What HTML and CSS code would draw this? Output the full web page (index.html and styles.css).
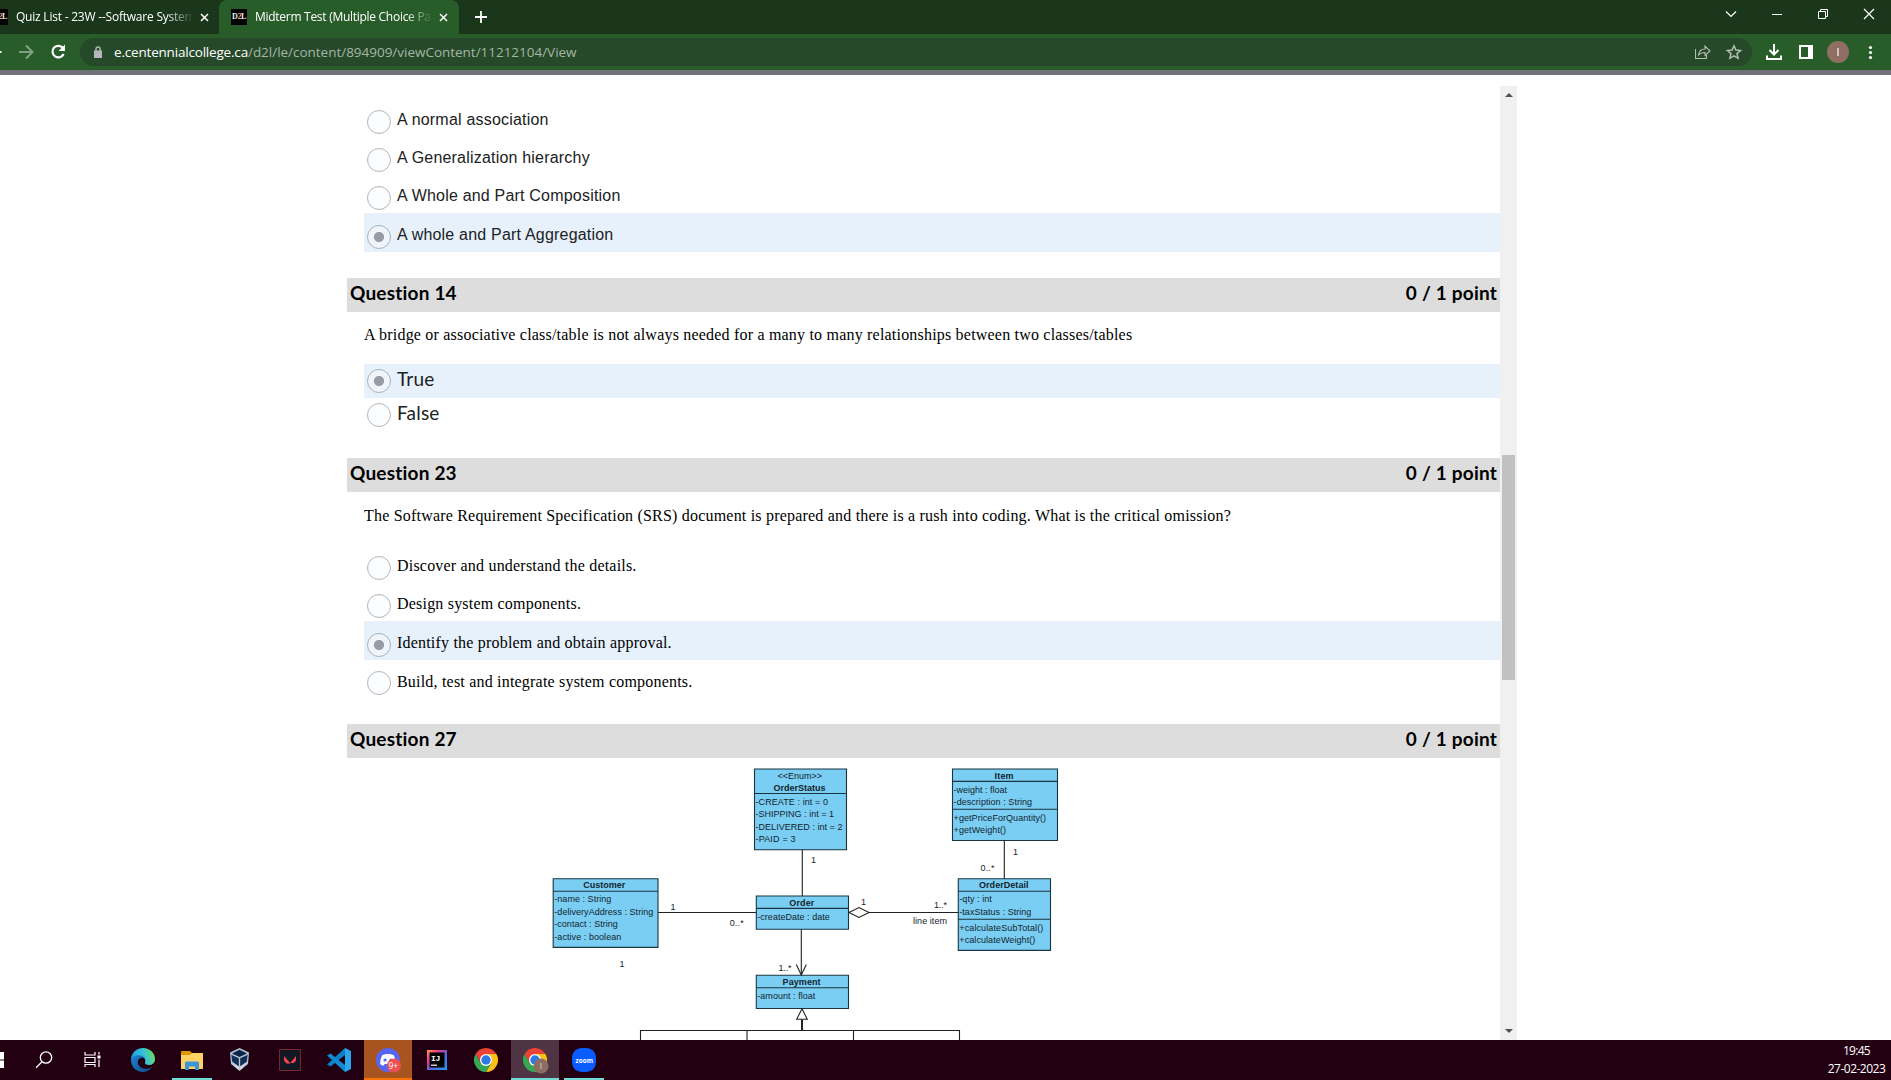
FILE: index.html
```
<!DOCTYPE html>
<html lang="en">
<head>
<meta charset="utf-8">
<title>Midterm Test (Multiple Choice Part)</title>
<link rel="stylesheet" href="styles.css">
</head>
<body>
<div class="screen">
  <header class="tabstrip">
    <div class="tab tab-first">
      <span class="favicon">D<i>2</i>L</span>
      <span class="tab-title title-quiz">Quiz List - 23W --Software Systems</span>
      <svg class="tab-close" viewBox="0 0 9 9"><path d="M1 1l7 7M8 1l-7 7"/></svg>
    </div>
    <div class="tab tab-active">
      <span class="favicon">D<i>2</i>L</span>
      <span class="tab-title title-test">Midterm Test (Multiple Choice Part)</span>
      <svg class="tab-close" viewBox="0 0 9 9"><path d="M1 1l7 7M8 1l-7 7"/></svg>
    </div>
    <svg class="new-tab" viewBox="0 0 12 12"><path d="M6 0v12M0 6h12"/></svg>
    <div class="window-buttons">
      <svg viewBox="0 0 46 28"><path d="M18 11.500l5 5 5-5" stroke-width="1.200"/></svg>
      <svg viewBox="0 0 46 28"><path d="M18 14.500h10"/></svg>
      <svg viewBox="0 0 46 28"><path d="M18.500 11.500h7v7h-7zM20.500 11.500v-2h7v7h-2"/></svg>
      <svg viewBox="0 0 46 28"><path d="M18 9l10 10M28 9l-10 10" stroke-width="1.200"/></svg>
    </div>
  </header>

  <nav class="toolbar">
    <svg class="nav-icons" viewBox="0 0 80 36">
      <path class="back" d="M0 18h1.500"/>
      <path class="forward" d="M19 18h13M26 11.500l6.500 6.500-6.500 6.500"/>
      <path class="reload" d="M63 14.200A5.800 5.800 0 1 0 63.600 20"/>
      <path class="reload-head" d="M65 10.500v6.500h-6.500z"/>
    </svg>
    <div class="omnibox">
      <svg class="lock" viewBox="0 0 8 12"><path d="M0 4.500h8v7.500H0z"/><path class="shackle" d="M2 5V3a2 2 0 0 1 4 0v2"/></svg>
      <span class="host">e.centennialcollege.ca</span><span class="path">/d2l/le/content/894909/viewContent/11212104/View</span>
      <svg class="omni-icons" viewBox="0 0 56 28">
        <path d="M.5 11v9.500h11v-3.500"/>
        <path d="M3.500 17c.5-4 3-6 6.500-6V8l5 5-5 4.500v-3c-3 0-5 .8-6.500 2.500z"/>
        <path d="M39 7.800l1.900 4.300 4.600.4-3.500 3.100 1.100 4.700-4.100-2.500-4.100 2.500 1.100-4.700-3.500-3.100 4.600-.4z" stroke-width="1.500"/>
      </svg>
    </div>
    <svg class="tool-icons" viewBox="0 0 139 36">
      <path class="line2" d="M22 10v10M17.500 16l4.500 4.500 4.500-4.500M15 21.500v3.500h14v-3.500"/>
      <path class="white" d="M47 11h14v14H47zM49 13v10h7V13z" fill-rule="evenodd"/>
      <circle cx="86" cy="18" r="11" fill="#8f6e64"/>
      <path d="M86 14v8" stroke="#e8deda" stroke-width="1.500"/>
      <g class="white"><circle cx="118.500" cy="13.500" r="1.600"/><circle cx="118.500" cy="18.500" r="1.600"/><circle cx="118.500" cy="23.500" r="1.600"/></g>
    </svg>
  </nav>

  <main class="page">
    <section class="quiz">
      <ul class="options sans">
        <li><span class="radio"></span>A normal association</li>
        <li><span class="radio"></span>A Generalization hierarchy</li>
        <li><span class="radio"></span>A Whole and Part Composition</li>
        <li class="selected"><span class="radio"></span>A whole and Part Aggregation</li>
      </ul>

      <h2 class="question"><span>Question 14</span><span>0 / 1 point</span></h2>
      <p class="prompt">A bridge or associative class/table is not always needed for a many to many relationships between two classes/tables</p>
      <ul class="options truefalse">
        <li class="selected"><span class="radio"></span>True</li>
        <li><span class="radio"></span>False</li>
      </ul>

      <h2 class="question q23"><span>Question 23</span><span>0 / 1 point</span></h2>
      <p class="prompt">The Software Requirement Specification (SRS) document is prepared and there is a rush into coding. What is the critical omission?</p>
      <ul class="options serif">
        <li><span class="radio"></span>Discover and understand the details.</li>
        <li><span class="radio"></span>Design system components.</li>
        <li class="selected"><span class="radio"></span>Identify the problem and obtain approval.</li>
        <li><span class="radio"></span>Build, test and integrate system components.</li>
      </ul>

      <h2 class="question"><span>Question 27</span><span>0 / 1 point</span></h2>
      <svg class="diagram" viewBox="540 758 560 282">
        <g class="box">
          <path d="M754.500 769h92v80.700h-92zM754.500 793.500h92"/>
          <path d="M952.500 769h105v71.500h-105zM952.500 781.400h105M952.500 809.300h105"/>
          <path d="M553.200 878.800h104.800v68.600H553.200zM553.200 891.300h104.800"/>
          <path d="M756.300 896h92.200v33.300h-92.200zM756.300 908.400h92.200"/>
          <path d="M958.300 878.800h92.200v71.600h-92.200zM958.300 891.300h92.200M958.300 919.300h92.200"/>
          <path d="M756.300 975.300h92.200v33.200h-92.200zM756.300 987.700h92.200"/>
        </g>
        <g class="link">
          <path d="M802.300 849.700V896M658 912.500h98.300M869 912.500h89.300M1004.300 840.500v38.300M801.300 929.300V975"/>
          <path d="M849 912.500l10-5 10 5-10 5z"/>
          <path d="M796.300 964.500l5 10.500 5-10.500"/>
          <path d="M802 1008.800l-5.300 10.500h10.600z"/>
          <path d="M802 1019.500v11" stroke-width="2"/>
          <path d="M640.500 1040v-9.500h319V1040M747 1030.500v9.500M853.500 1030.500v9.500"/>
        </g>
        <g class="name">
          <text x="777.500" y="778.600" class="plain" textLength="44.500">&lt;&lt;Enum&gt;&gt;</text>
          <text x="773.600" y="790.700" textLength="52">OrderStatus</text>
          <text x="994.600" y="778.600" textLength="19">Item</text>
          <text x="583.300" y="888.300" textLength="42">Customer</text>
          <text x="789.300" y="905.600" textLength="25">Order</text>
          <text x="979" y="888.300" textLength="49.500">OrderDetail</text>
          <text x="782.600" y="984.800" textLength="38">Payment</text>
        </g>
        <g class="member">
          <text x="755.500" y="804.700" textLength="72.500">-CREATE : int = 0</text>
          <text x="755.500" y="817.200" textLength="78.500">-SHIPPING : int = 1</text>
          <text x="755.500" y="829.700" textLength="87">-DELIVERED : int = 2</text>
          <text x="755.500" y="842" textLength="40">-PAID = 3</text>
          <text x="953.600" y="792.700" textLength="53.500">-weight : float</text>
          <text x="953.600" y="805.200" textLength="78.500">-description : String</text>
          <text x="953.600" y="820.900" textLength="92.500">+getPriceForQuantity()</text>
          <text x="953.600" y="833.300" textLength="52.500">+getWeight()</text>
          <text x="554.300" y="902.400" textLength="57">-name : String</text>
          <text x="554.300" y="914.800" textLength="99">-deliveryAddress : String</text>
          <text x="554.300" y="927.200" textLength="63.500">-contact : String</text>
          <text x="554.300" y="939.700" textLength="67">-active : boolean</text>
          <text x="757.300" y="919.700" textLength="72.500">-createDate : date</text>
          <text x="959.300" y="902.400" textLength="32.500">-qty : int</text>
          <text x="959.300" y="914.800" textLength="72">-taxStatus : String</text>
          <text x="959.300" y="930.500" textLength="84">+calculateSubTotal()</text>
          <text x="959.300" y="943" textLength="76">+calculateWeight()</text>
          <text x="757.300" y="998.800" textLength="58">-amount : float</text>
          <text x="811" y="862.700">1</text>
          <text x="670.500" y="909.700">1</text>
          <text x="619.500" y="966.700">1</text>
          <text x="861" y="904.700">1</text>
          <text x="1013" y="855.400">1</text>
          <text x="729.700" y="926" textLength="14">0..*</text>
          <text x="980.500" y="871" textLength="14">0..*</text>
          <text x="778.500" y="971" textLength="13">1..*</text>
          <text x="934" y="908" textLength="13">1..*</text>
          <text x="913" y="923.500" textLength="34">line item</text>
        </g>
      </svg>
    </section>
    <div class="scrollbar"><i class="up"></i><div class="thumb"></div><i class="down"></i></div>
  </main>

  <footer class="taskbar">
    <svg class="start" viewBox="0 0 21 40"><path d="M0 12h4v7.500H0zM0 20.500h4V28H0z" fill="#fff"/></svg>
    <div class="app"><svg viewBox="1 0 48 40"><g fill="none" stroke="#fff" stroke-width="1.300"><circle cx="26" cy="17.500" r="5.700"/><path d="M22 21.700l-6 6"/></g></svg></div>
    <div class="app"><svg viewBox="1.500 0 48 40"><path d="M16.500 12v3h10v-3M16.500 27v-2.500h10V27M16.500 17.500h10v5h-10zM30.500 12v2.500M30.500 19.500V27" fill="none" stroke="#fff" stroke-width="1.200"/><path d="M29 15.500h3v3h-3z" fill="#fff"/></svg></div>
    <div class="app"><svg viewBox="0 0 48 40">
      <defs>
        <linearGradient id="edge-top" x1="0" y1=".5" x2="1" y2=".3"><stop offset="0" stop-color="#1b9de2"/><stop offset=".55" stop-color="#35c1d8"/><stop offset="1" stop-color="#6fe05a"/></linearGradient>
        <linearGradient id="edge-low" x1="0" y1="0" x2="1" y2="1"><stop offset="0" stop-color="#1b82d0"/><stop offset="1" stop-color="#114a8b"/></linearGradient>
      </defs>
      <path d="M12 20c0-7 5-12 12-12 7 0 12 5 12 11 0 4-3 6-6 6-3 0-4.500-1-4-2.500 1-3-.5-6-5-6-4 0-8 1.500-9 3.500z" fill="url(#edge-top)"/>
      <path d="M12 20c1-5 11-6.500 13.500-2-5-1-7.500 2-6.500 5.500 1.500 5 8 7 14 3.500-2 3.500-6 5-9 5-7 0-12-5-12-12z" fill="url(#edge-low)"/>
    </svg></div>
    <div class="app open"><svg viewBox="0 0 48 40"><path d="M13 12c0-1 .5-1 1-1h8l2 2v3H13z" fill="#df9700"/><path d="M13 15h9l2-2h11v15c0 .7-.4 1-1 1H14c-.7 0-1-.4-1-1z" fill="#ffd363"/><path d="M17 30v-7c0-1 .5-1.500 1.500-1.500h11c1 0 1.500.5 1.500 1.500v7h-4v-3.500h-6V30z" fill="#3b93d8"/></svg></div>
    <div class="app"><svg viewBox="0 0 48 40"><path d="M22.500 8l9.500 4.500-1 11.500-8.500 7-8.500-7-1-11.500z" fill="#b6c3d4"/><path d="M15 13.500l7.500-3.700 7.500 3.700-7.500 3.500z" fill="#0d2346"/><path d="M14.300 14.700l7.500 3.500v8l-6.500-4.500zM30.700 14.700l-7.500 3.500v8l6.500-4.500z" fill="#0f2d55"/><path d="M16 23l5.800 4v3zM29 23l-5.800 4v3z" fill="#eef2f7" opacity=".7"/></svg></div>
    <div class="app"><svg viewBox="0 0 48 40"><path d="M13.500 9.500h21v21h-21z" fill="#101822" stroke="#7d2433"/><path d="M18 16l6.500 7.500h-4L18 20.500zM30 16v4.500l-2.200 2.600h-3.500z" fill="#fa4454"/></svg></div>
    <div class="app"><svg viewBox="0 0 48 40"><path d="M30 8l6 3v18l-6 3z" fill="#29a8ee"/><path d="M30 8v7L15.500 26.500 12 24.500z" fill="#0c7fc6"/><path d="M30 32v-7L15.500 13.500 12 15.500z" fill="#108bd2"/></svg></div>
    <div class="app alert"><svg viewBox="0 0 48 40"><circle cx="24" cy="20" r="12" fill="#5865f2"/><path d="M18.500 15c3-1.500 8-1.500 11 0 1.500 2.500 2.500 6 2.300 9-1 1-2.500 1.500-3.500 1.500l-1-1.500h-6.600l-1 1.500c-1 0-2.500-.5-3.500-1.500-.2-3 .8-6.500 2.300-9z" fill="#fff"/><circle cx="21" cy="20" r="1.600" fill="#5865f2"/><circle cx="27" cy="20" r="1.600" fill="#5865f2"/><circle cx="30" cy="25.500" r="7" fill="#ee4e50"/><text x="24.500" y="28.500" class="badge">9+</text></svg></div>
    <div class="app"><svg viewBox="0 0 48 40">
      <defs><linearGradient id="idea" x1="0" y1="0" x2="1" y2="1"><stop offset="0" stop-color="#f9a03c"/><stop offset=".3" stop-color="#f0358c"/><stop offset=".55" stop-color="#5a63d8"/><stop offset="1" stop-color="#18a0fb"/></linearGradient></defs>
      <path d="M14 10h20v20H14z" fill="url(#idea)"/><path d="M16.500 12.500h15v15h-15z" fill="#000"/><text x="18" y="21" class="ij">IJ</text><path d="M18 25.200h6" stroke="#fff" stroke-width="1.200"/></svg></div>
    <div class="app"><svg viewBox="0 0 48 40"><g id="chrome">
      <path d="M24 14h10.400a12 12 0 0 1-10.400 18l5.200-9z" fill="#fbc116"/><path d="M24 32l5.200-9-10.400 0-5.200-9a12 12 0 0 0 10.400 18z" fill="#34a853"/><path d="M13.600 14A12 12 0 0 1 34.400 14H24l-5.200 9z" fill="#ea4335"/>
      <circle cx="24" cy="20" r="6" fill="#fff"/><circle cx="24" cy="20" r="4.700" fill="#2c7be5"/></g></svg></div>
    <div class="app current"><svg viewBox="0 0 48 40"><use href="#chrome"/><circle cx="30" cy="26" r="7.500" fill="#8d6e63"/><path d="M30 23v6" stroke="#cfc0ba"/></svg></div>
    <div class="app open"><svg viewBox="0 0 48 40"><rect x="12" y="8" width="24" height="24" rx="9.500" fill="#0b5cff"/><text x="15.500" y="22.500" class="zoom" textLength="17.500" lengthAdjust="spacingAndGlyphs">zoom</text></svg></div>
    <div class="clock"><span class="time">19:45</span><span class="date">27-02-2023</span></div>
  </footer>
</div>
</body>
</html>
```
FILE: styles.css
```
* { box-sizing: border-box; }
body { margin: 0; background: #fff; overflow: hidden; }
svg { display: block; flex: none; }
ul, h2, p { margin: 0; padding: 0; list-style: none; }

.screen { width: 1891px; height: 1080px; display: flex; flex-direction: column; overflow: hidden; }

/* Tab strip */
.tabstrip { display: flex; height: 34px; flex: none; background: #1a371b; font: 12px/34px "Open Sans", "Noto Sans", sans-serif; color: #fff; }
.tab { display: flex; align-items: center; height: 34px; }
.tab-first { width: 219px; }
.tab-first .favicon { margin-left: -8px; }
.tab-active { width: 240px; padding-left: 12px; background: #285d2a; border-radius: 8px 8px 0 0; }
.favicon { width: 16px; height: 16px; background: #000; color: #eee; font: bold 8px/16px "Liberation Serif", serif; letter-spacing: -.4px; text-align: center; overflow: hidden; flex: none; }
.favicon i { font-style: normal; color: #e8a878; }
.tab-title { width: 176px; margin-left: 8px; overflow: hidden; white-space: nowrap; flex: none; -webkit-mask-image: linear-gradient(90deg, #000 150px, transparent 178px); mask-image: linear-gradient(90deg, #000 150px, transparent 178px); }
.title-quiz { letter-spacing: -.22px; }
.title-test { letter-spacing: -.28px; }
.tab-close { width: 9px; height: 9px; margin-left: 8px; fill: none; stroke: #fff; stroke-width: 1.5; }
.new-tab { width: 12px; height: 12px; margin: 11px 0 0 16px; stroke: #fff; stroke-width: 1.8; }
.window-buttons { display: flex; margin-left: auto; margin-right: -1px; }
.window-buttons svg { width: 46px; height: 28px; fill: none; stroke: #fff; }

/* Toolbar */
.toolbar { display: flex; align-items: center; height: 41px; flex: none; padding-bottom: 5px; background: linear-gradient(#285d2a 36px, #6f7377 36px); }
.nav-icons { width: 80px; height: 36px; fill: none; }
.back { stroke: #fff; stroke-width: 2; }
.forward { stroke: #82a083; stroke-width: 2; }
.reload { stroke: #fff; stroke-width: 2.2; }
.reload-head { fill: #fff; }
.omnibox { display: flex; align-items: center; width: 1672px; height: 28px; padding: 0 0 0 14px; border-radius: 14px; background: #264929; font: 13.5px/28px "Open Sans", "Noto Sans", sans-serif; }
.lock { width: 8px; height: 12px; margin-right: 12px; fill: #b4b8bd; }
.shackle { fill: none; stroke: #b4b8bd; stroke-width: 1.4; }
.host { color: #fff; letter-spacing: -.19px; }
.path { color: #a4b5a5; letter-spacing: -.02px; }
.omni-icons { width: 56px; height: 28px; margin-left: auto; margin-right: 1px; fill: none; stroke: #b3beb4; stroke-width: 1.1; }
.tool-icons { width: 139px; height: 36px; }
.line2 { fill: none; stroke: #fff; stroke-width: 2; }
.white { fill: #fff; }

/* Quiz page */
.page { display: flex; height: 965px; flex: none; padding: 11px 0 0 347px; overflow: hidden; }
.quiz { width: 1153px; height: 954px; padding-top: 12px; overflow: hidden; letter-spacing: .2px; }
.options { margin-left: 17px; }
.options li { display: flex; height: 38px; padding: 12px 0 0 3px; color: #202122; line-height: 20px; }
.options li.selected { height: 39px; margin-top: 1px; background: #e6f1fc; }
.options li.selected + li { padding-top: 11px; line-height: 21px; }
.radio { width: 24px; height: 24px; margin-right: 6px; border: 1px solid #b2b5b9; border-radius: 50%; background: #fcfdfe; flex: none; }
.selected .radio { background: radial-gradient(circle at center, #989da5 4.7px, #f0f5fc 5.4px); border-color: #a9b1bb; }
.sans { font: 16px "Liberation Sans", Arial, sans-serif; }
.serif { font: 16px "Liberation Serif", "Times New Roman", serif; }
.serif li { color: #000; }
.truefalse { font: 19px Lato, sans-serif; }
.truefalse li, .truefalse li.selected, .truefalse li.selected + li { height: 34px; margin-top: 0; padding-top: 5px; line-height: 20px; }
.question { display: flex; justify-content: space-between; height: 34px; margin-top: 26px; padding: 0 3px; background: #ddd; font: bold 19px/30px Lato, sans-serif; color: #000; }
.prompt { height: 52px; padding: 14px 0 0 17px; font: 16px/18px "Liberation Serif", "Times New Roman", serif; color: #000; white-space: nowrap; }
.q23 + .prompt { padding-top: 15px; }

/* Class diagram */
.diagram { width: 560px; height: 282px; margin-left: 193px; letter-spacing: 0; }
.box { fill: #7bcef3; stroke: #1b3442; stroke-width: 1.1; }
.link { fill: none; stroke: #222; stroke-width: 1.1; }
.name { font: bold 9px "Liberation Sans", Arial, sans-serif; fill: #12242e; }
.plain { font-weight: normal; }
.member { font: 9px "Liberation Sans", Arial, sans-serif; fill: #12242e; }

/* Scrollbar */
.scrollbar { display: flex; flex-direction: column; align-items: center; width: 17px; height: 954px; padding: 7px 0; background: #f0f0f0; }
.up, .down { width: 0; height: 0; border: 4px solid transparent; }
.up { border-top-width: 0; border-bottom-color: #505050; }
.down { margin-top: auto; border-bottom-width: 0; border-top-color: #505050; }
.thumb { width: 13px; height: 225px; margin-top: 358px; background: #c1c1c1; }

/* Taskbar */
.taskbar { display: flex; height: 40px; flex: none; background: #220011; color: #fff; }
.start { width: 21px; height: 40px; }
.app { width: 48px; height: 40px; margin-right: 1px; flex: none; }
.app svg { width: 48px; height: 40px; }
.app.alert { background: linear-gradient(#a75420 38px, #ff7300 38px); }
.app.current { background: linear-gradient(#4f3543 38px, #6fdbd2 38px); }
.app.open { background: linear-gradient(#6fdbd2, #6fdbd2) center bottom / 40px 2px no-repeat; }
.badge { font: 8.5px "Open Sans", sans-serif; fill: #fff; }
.ij { font: bold 8px "Liberation Mono", monospace; fill: #fff; letter-spacing: -.4px; }
.zoom { font: bold 7px "Open Sans", sans-serif; fill: #fff; }
.clock { display: flex; flex-direction: column; align-items: center; width: 69px; margin-left: auto; padding-top: 2px; font: 12px/18px "Open Sans", "Noto Sans", sans-serif; }
.time { letter-spacing: -.7px; }
.date { letter-spacing: -.5px; }
```
